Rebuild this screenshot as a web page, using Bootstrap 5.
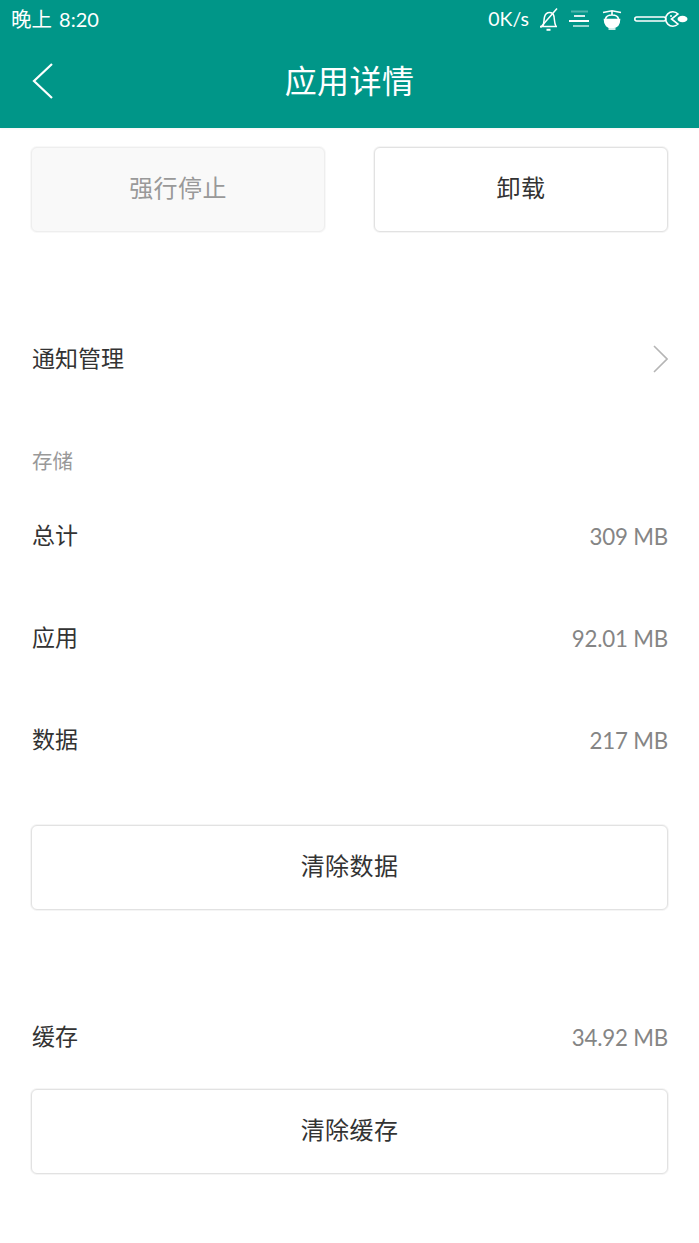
<!DOCTYPE html>
<html lang="zh-CN">
<head>
<meta charset="utf-8">
<title>应用详情</title>
<link href="https://cdn.jsdelivr.net/npm/bootstrap@5.3.0/dist/css/bootstrap.min.css" rel="stylesheet">
<style>
html,body{height:100%;}
body{margin:0;background:#fff;font-family:"Lato","Noto Sans CJK SC",sans-serif;color:#333;overflow:hidden;}
.app-top{background:#009688;height:128px;color:#fff;box-shadow:0 1px 2px rgba(0,0,0,.05);}
.status-strip{height:38px;padding:0 11px;font-size:20px;line-height:38px;}
.clock-text{word-spacing:2px;margin-top:-1px;}
.clock-zh{font-size:20.5px;}
.status-icons{gap:9px;}
.speed-text{font-size:19.5px;margin-top:-1px;}
.icon-wide-gap{margin-left:3px;}
.title-strip{height:90px;padding:0 31px 4px 31px;}
.title-text{font-size:32px;line-height:1;letter-spacing:.4px;left:0;right:0;top:27px;text-align:center;}
.page-body{padding:19px 31px 0;}
.act-btn{height:85px;border:1px solid #e2e2e2;box-shadow:0 0 0 1px #f5f5f5;border-radius:6px;background:#fff;color:#333;font-size:24px;display:flex;align-items:center;justify-content:center;padding:0 0 4px;letter-spacing:.4px;}
.act-half{width:294px;}
.act-off{background:#f9f9f9;color:#999;border-color:#eeeeee;box-shadow:0 0 0 1px #f8f8f8;}
.info-row{height:102px;font-size:23px;}
.info-row>span:first-child{padding-bottom:2px;margin-left:1px;}
.info-val{color:#858585;font-size:22.3px;letter-spacing:-.2px;padding-top:1px;}
.notify-row{margin-top:76px;}
.group-label{margin-top:27px;height:48px;font-size:20.5px;color:#999;padding-left:1px;}
.clear-data{margin-top:34px;}
.cache-row{margin-top:76px;}
.cache-btn{margin-top:1px;}
</style>
</head>
<body>
<header class="app-top">
  <div class="status-strip d-flex justify-content-between align-items-center">
    <span class="clock-text"><span class="clock-zh">晚上</span> 8:20</span>
    <div class="status-icons d-flex align-items-center">
      <span class="speed-text">0K/s</span>
      <svg width="21" height="24" viewBox="0 0 21 24" fill="none" stroke="#fff" stroke-width="1.5"><path d="M2 19.500h17M4.500 19.500c1.800-2.500 1.200-6.500 2-9.500 .8-3 2.500-4.500 5-4.500s4 1.500 4.500 4c.5 3 .3 7 2 10"/><path d="M2.500 20.500 19 1.500"/><path d="M8.500 22.800h4" stroke-width="2"/></svg>
      <svg width="22" height="20" viewBox="0 0 22 20" fill="none" stroke="#fff" stroke-width="2"><path d="M3 2.500h17" opacity=".3"/><path d="M6 7h11" opacity=".85"/><path d="M1 12h20"/><path d="M5 17h16" opacity=".6"/></svg>
      <svg class="icon-wide-gap" width="20" height="21" viewBox="0 0 20 21" fill="none" stroke="#fff" stroke-width="1.6"><path d="M1 3.500 10 1.800l9 1.700M10 2v4M3.500 10c.5-2.800 3-4 6.500-4s6 1.200 6.500 4"/><path d="M2.500 10.500h15c0 5.500-3 8-7.500 8s-7.500-2.500-7.500-8z" fill="#fff"/><path d="M6.500 20h7"/></svg>
      <svg class="icon-wide-gap" width="54" height="18" viewBox="0 0 54 18" fill="none" stroke="#fff" stroke-width="1.6"><rect x=".8" y="7" width="31" height="4" rx="2"/><path d="M44 4a7.200 7.200 0 1 0 0 10l-6.500-5z"/><circle cx="37" cy="6" r="1" fill="#fff" stroke="none"/><ellipse cx="48.500" cy="9" rx="5" ry="3.300" fill="#fff" stroke="none"/></svg>
    </div>
  </div>
  <div class="title-strip position-relative d-flex align-items-center">
    <svg width="24" height="38" viewBox="0 0 24 38" fill="none" stroke="#fff" stroke-width="2.2"><path d="M21 2 3 19l18 17"/></svg>
    <div class="title-text position-absolute">应用详情</div>
  </div>
</header>
<main class="page-body">
  <div class="d-flex justify-content-between">
    <button type="button" class="act-btn act-half act-off">强行停止</button>
    <button type="button" class="act-btn act-half">卸载</button>
  </div>
  <div class="info-row notify-row d-flex justify-content-between align-items-center">
    <span>通知管理</span>
    <svg width="16" height="28" viewBox="0 0 16 28" fill="none" stroke="#b5b5b5" stroke-width="1.6"><path d="M2 1l13 13L2 27"/></svg>
  </div>
  <div class="group-label d-flex align-items-center">存储</div>
  <div class="info-row d-flex justify-content-between align-items-center"><span>总计</span><span class="info-val">309 MB</span></div>
  <div class="info-row d-flex justify-content-between align-items-center"><span>应用</span><span class="info-val">92.01 MB</span></div>
  <div class="info-row d-flex justify-content-between align-items-center"><span>数据</span><span class="info-val">217 MB</span></div>
  <button type="button" class="act-btn w-100 clear-data">清除数据</button>
  <div class="info-row cache-row d-flex justify-content-between align-items-center"><span>缓存</span><span class="info-val">34.92 MB</span></div>
  <button type="button" class="act-btn w-100 cache-btn">清除缓存</button>
</main>
<script src="https://cdn.jsdelivr.net/npm/bootstrap@5.3.0/dist/js/bootstrap.bundle.min.js"></script>
</body>
</html>
